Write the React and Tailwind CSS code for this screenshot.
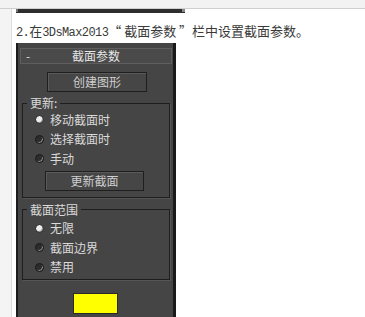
import React from 'react';

const cjk = { fontFamily: '"Noto Sans CJK SC", "Noto Sans", sans-serif' };
const mono = { fontFamily: '"Liberation Mono", monospace' };

function Radio({ label, checked }) {
  return (
    <div className="flex items-center h-[19.5px] pl-[12px]">
      {checked ? (
        <span className="w-[9px] h-[9px] rounded-full border border-[#1a1a1a] bg-[#eeeeee] shadow-[inset_-1px_-1px_0_#9a9a9a]" />
      ) : (
        <span className="w-[9px] h-[9px] rounded-full border border-[#1a1a1a] bg-[#2c2c2c] shadow-[inset_-1px_-1px_0_#8a8a8a]" />
      )}
      <span className="ml-[6px] text-[12px] leading-none text-[#dadada]">{label}</span>
    </div>
  );
}

function MaxButton({ children, className }) {
  return (
    <div
      className={
        'h-[20px] flex items-center justify-center border border-[#1f1f1f] bg-[#464646] shadow-[inset_1px_1px_0_#5a5a5a] text-[12px] leading-none text-[#cfcfcf] ' +
        className
      }
    >
      {children}
    </div>
  );
}

function Group({ title, children, className }) {
  return (
    <fieldset
      className={
        'ml-[4px] w-[148px] border border-[#1e1e1e] shadow-[1px_1px_0_#555555] px-0 ' + className
      }
    >
      <legend className="ml-[4px] px-[3px] h-[16px] leading-[16px] text-[12px] text-[#dadada]">
        {title}
      </legend>
      {children}
    </fieldset>
  );
}

export default function App() {
  return (
    <div className="w-[365px] h-[317px] bg-white overflow-hidden flex flex-col" style={cjk}>
      <div className="h-[9px] shrink-0 bg-[#f2f2f2] border-b border-[#cfcfcf]" />
      <div className="flex flex-1 min-h-0">
        <div className="w-[12px] shrink-0 bg-[#f4f4f4] border-r border-[#dddddd]" />
        <div className="pl-[4px] flex flex-col flex-1 min-h-0">
          <div className="w-[169px] h-[4px] bg-[#2e2e2e] flex justify-between">
            <span className="w-[2px] h-[3px] bg-[#777]" />
            <span className="w-[3px] h-[3px] bg-[#888]" />
          </div>
          <div className="pt-[10px] pb-[4px] h-[30px] leading-[16px] text-[13px] text-[#3a3a3a] whitespace-nowrap">
            <span style={mono} className="text-[12px] tracking-[-0.6px]">2.</span>
            <span>在</span>
            <span style={mono} className="text-[12px] tracking-[-0.6px]">3DsMax2013</span>
            <span>“ 截面参数 ”</span>
            <span>栏中设置截面参数。</span>
          </div>
          <div className="w-[160px] flex-1 bg-[#454545] border-l-2 border-r-[3px] border-l-[#1c1c1c] border-r-[#1a1a1a] flex flex-col">
            <div className="mt-[5px] ml-[2px] w-[152px] h-[16px] border border-[#5e5e5e] bg-[#4a4a4a] flex items-center">
              <span className="pl-[5px] w-[20px] text-[12px] leading-none text-[#dcdcdc]">-</span>
              <span className="flex-1 text-center pr-[20px] text-[12px] leading-none text-[#e6e6e6]">截面参数</span>
            </div>
            <MaxButton className="mt-[8px] ml-[29px] w-[100px]">创建图形</MaxButton>
            <Group title="更新:" className="mt-[3px] pb-[6px]">
              <div className="-mt-[1px]">
                <Radio label="移动截面时" checked />
                <Radio label="选择截面时" />
                <Radio label="手动" />
              </div>
              <MaxButton className="mt-[2px] ml-[22px] w-[99px]">更新截面</MaxButton>
            </Group>
            <Group title="截面范围" className="mt-[4px] pb-[2px]">
              <div className="mt-[1px]">
                <Radio label="无限" checked />
                <Radio label="截面边界" />
                <Radio label="禁用" />
              </div>
            </Group>
            <div className="mt-[13px] ml-[55px] w-[45px] h-[21px] bg-[#ffff00] border border-[#2a2a2a]" />
          </div>
        </div>
      </div>
    </div>
  );
}
